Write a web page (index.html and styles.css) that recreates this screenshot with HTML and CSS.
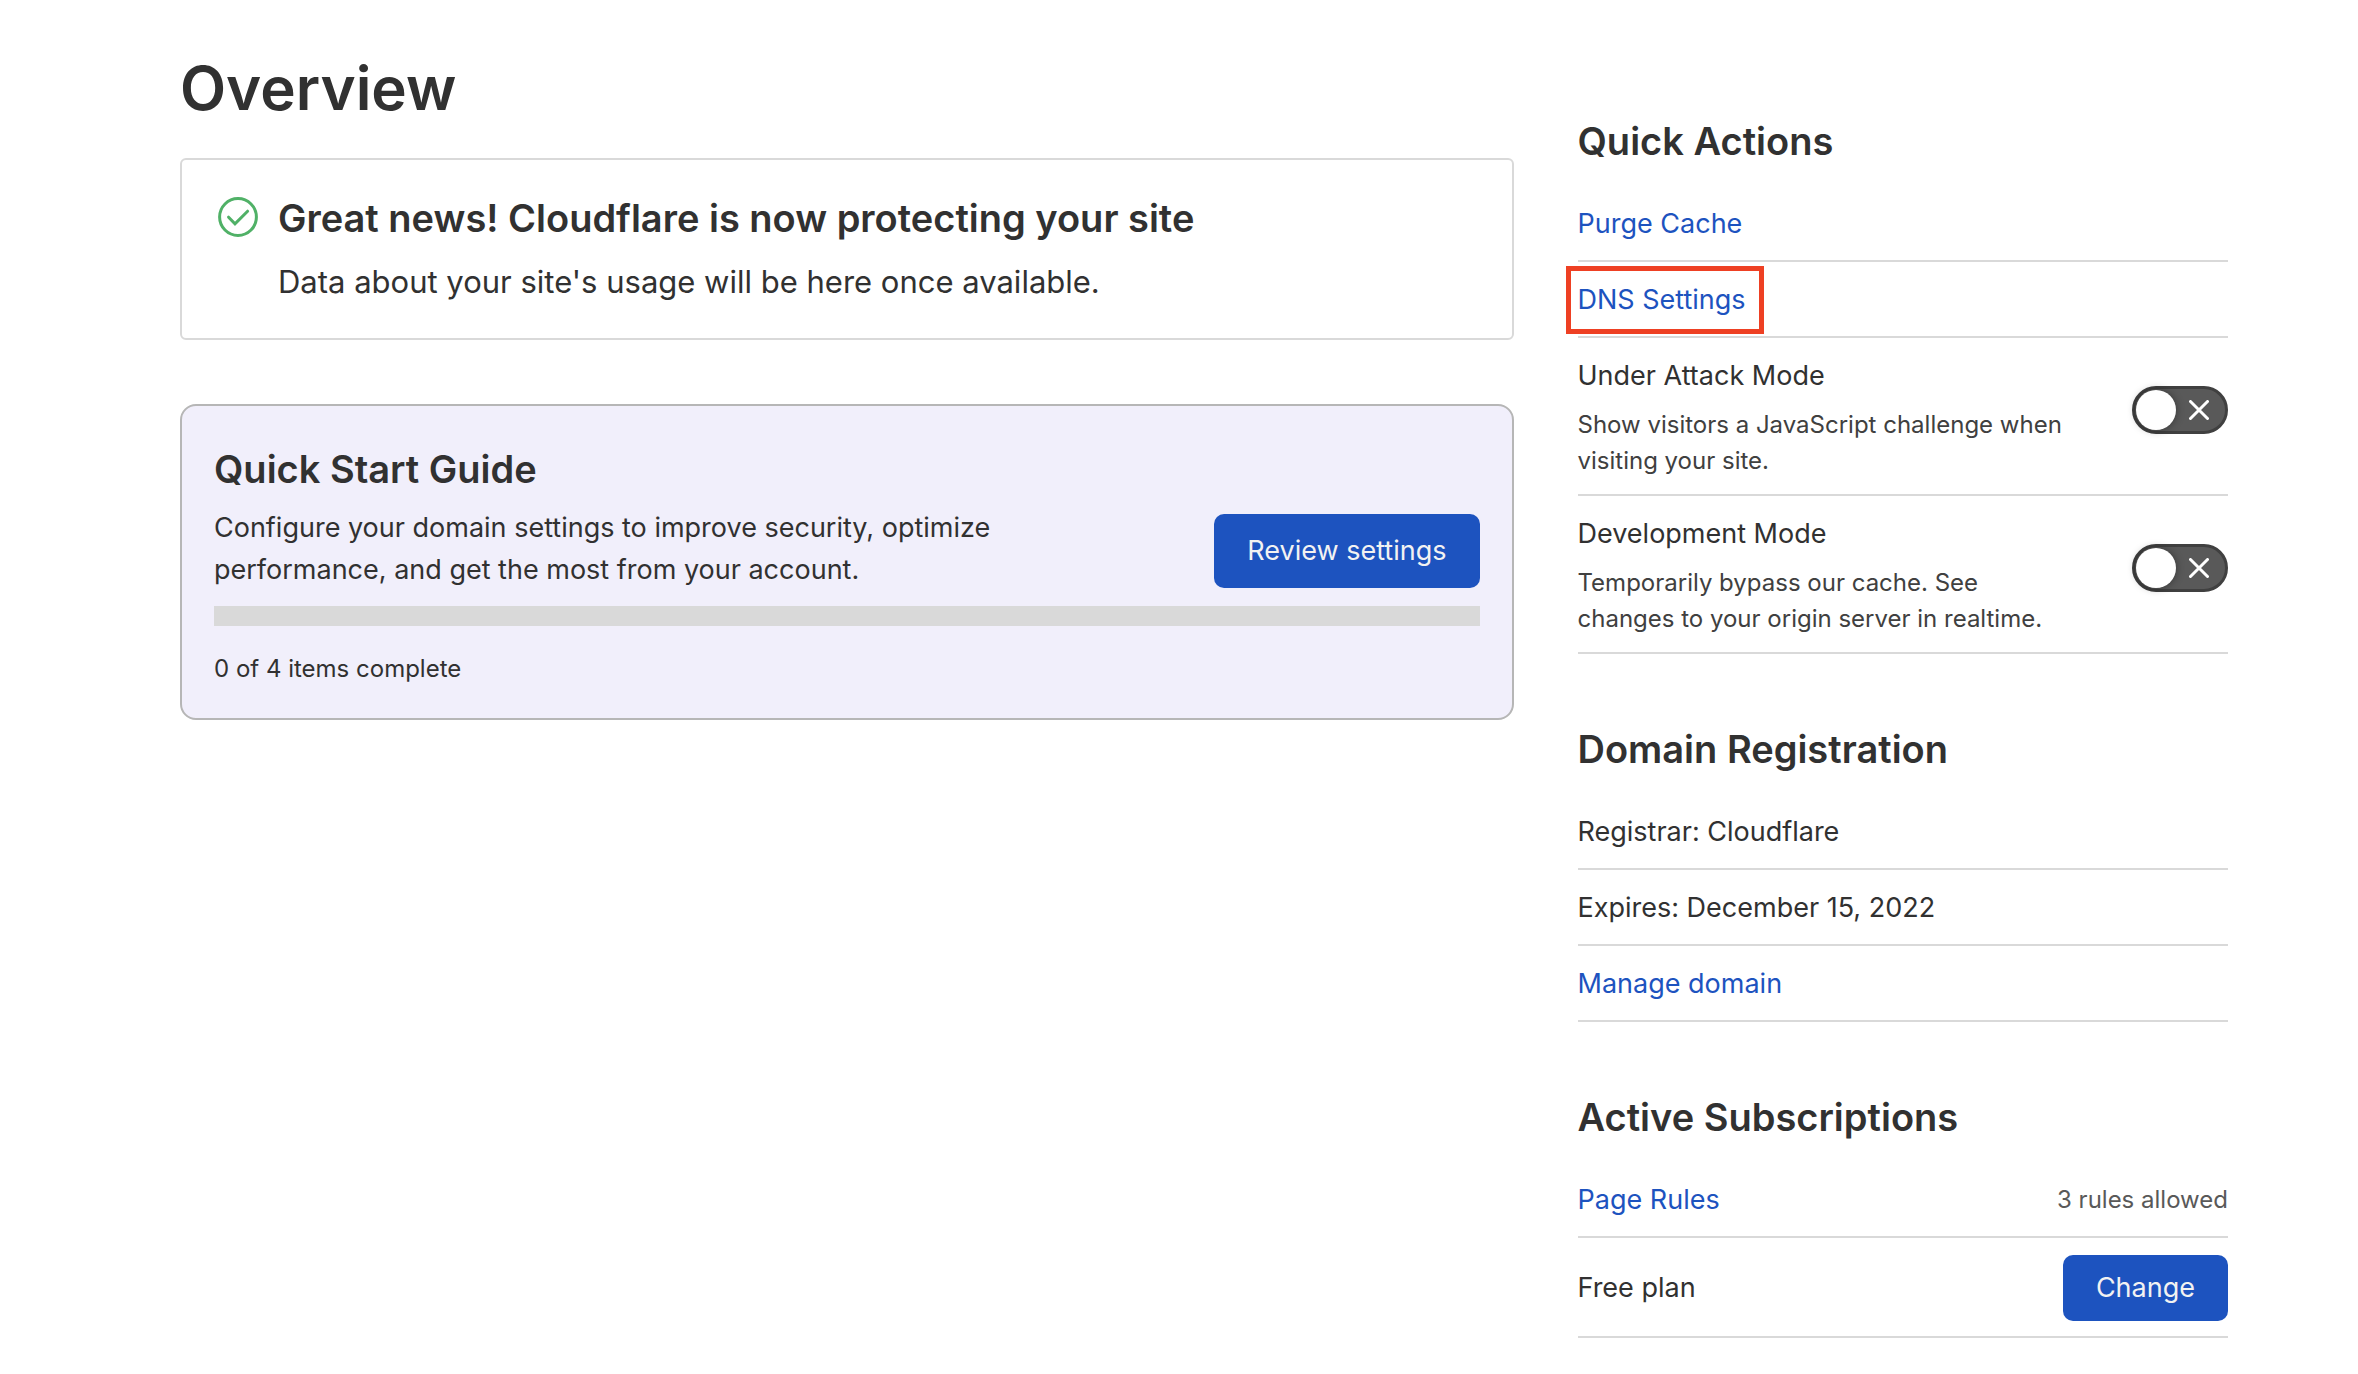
FILE: index.html
```html
<!DOCTYPE html>
<html lang="en">
<head>
  <meta charset="utf-8">
  <meta name="viewport" content="width=device-width, initial-scale=1">
  <title>Overview</title>
  <link rel="stylesheet" href="styles.css">
</head>
<body>
  <div class="page">
    <main class="main">
      <h1 class="page-title">Overview</h1>

      <section class="notice">
        <svg class="notice-icon" viewBox="0 0 40 40" fill="none" stroke="currentColor" stroke-width="3" aria-hidden="true">
          <circle cx="20" cy="20" r="18.4"/>
          <path d="M10.6 20.2 L17 26.8 L29.6 14.2" stroke-linecap="round"/>
        </svg>
        <div class="notice-body">
          <h2 class="heading">Great news! Cloudflare is now protecting your site</h2>
          <p class="notice-text">Data about your site's usage will be here once available.</p>
        </div>
      </section>

      <section class="guide">
        <div class="guide-top">
          <div class="guide-copy">
            <h2 class="heading">Quick Start Guide</h2>
            <p class="guide-text">Configure your domain settings to improve security, optimize performance, and get the most from your account.</p>
          </div>
          <button class="button button-large" type="button">Review settings</button>
        </div>
        <progress class="guide-progress" id="guide-progress" value="0" max="4"></progress>
        <label class="guide-status" for="guide-progress">0 of 4 items complete</label>
      </section>
    </main>

    <aside class="sidebar">
      <section class="panel">
        <h2 class="heading">Quick Actions</h2>
        <ul class="rows">
          <li class="row"><a class="link" href="#purge-cache">Purge Cache</a></li>
          <li class="row row-marked"><a class="link" href="#dns">DNS Settings</a></li>
          <li class="row row-setting">
            <div class="setting">
              <label for="attack-mode">Under Attack Mode</label>
              <p class="setting-text">Show visitors a JavaScript challenge when visiting your site.</p>
            </div>
            <span class="switch">
              <input class="switch-input" id="attack-mode" type="checkbox">
              <svg class="switch-mark" viewBox="0 0 20 20" aria-hidden="true"><path d="M1.5 1.5 L18.5 18.5 M18.5 1.5 L1.5 18.5"/></svg>
            </span>
          </li>
          <li class="row row-setting">
            <div class="setting">
              <label for="dev-mode">Development Mode</label>
              <p class="setting-text">Temporarily bypass our cache. See changes to your origin server in realtime.</p>
            </div>
            <span class="switch">
              <input class="switch-input" id="dev-mode" type="checkbox">
              <svg class="switch-mark" viewBox="0 0 20 20" aria-hidden="true"><path d="M1.5 1.5 L18.5 18.5 M18.5 1.5 L1.5 18.5"/></svg>
            </span>
          </li>
        </ul>
      </section>

      <section class="panel">
        <h2 class="heading">Domain Registration</h2>
        <ul class="rows">
          <li class="row">Registrar: Cloudflare</li>
          <li class="row">Expires: December 15, 2022</li>
          <li class="row"><a class="link" href="#manage-domain">Manage domain</a></li>
        </ul>
      </section>

      <section class="panel">
        <h2 class="heading">Active Subscriptions</h2>
        <ul class="rows">
          <li class="row"><a class="link" href="#page-rules">Page Rules</a><span class="row-note">3 rules allowed</span></li>
          <li class="row">Free plan<button class="button" type="button">Change</button></li>
        </ul>
      </section>
    </aside>
  </div>
</body>
</html>
```
FILE: styles.css
```css
* {
  box-sizing: border-box;
}

body,
h1,
h2,
p,
ul {
  margin: 0;
  padding: 0;
}

body {
  background: #fff;
  color: #313131;
  font-family: Inter, "Liberation Sans", sans-serif;
  font-size: 27px;
  line-height: 42px;
}

.page {
  display: grid;
  grid-template-columns: minmax(0, 41fr) minmax(0, 20fr);
  column-gap: 64px;
  padding: 48px 130px 36px 180px;
}

.page-title {
  margin-bottom: 30px;
  font-size: 60px;
  font-weight: 600;
  line-height: 80px;
}

.heading {
  font-size: 38px;
  font-weight: 600;
  line-height: 48px;
}

.notice {
  display: flex;
  gap: 20px;
  padding: 34px 36px 32px;
  border: 2px solid #d9d9d9;
  border-radius: 6px;
}

.notice-icon {
  flex: none;
  width: 40px;
  height: 40px;
  margin-top: 3px;
  color: #50b167;
}

.notice-text {
  margin-top: 16px;
  font-size: 31px;
  line-height: 48px;
}

.guide {
  margin-top: 64px;
  padding: 39px 32px 31px;
  border: 2px solid #b6b6b6;
  border-radius: 16px;
  background: #f1effb;
}

.guide-top {
  display: flex;
  align-items: flex-end;
  justify-content: space-between;
  gap: 32px;
}

.guide-text {
  max-width: 820px;
  margin-top: 14px;
}

.guide-progress {
  display: block;
  width: 100%;
  height: 20px;
  margin: 15px 0 25px;
  border: 0;
  background: #d9d9d9;
  appearance: none;
}

.guide-progress::-webkit-progress-bar {
  background: #d9d9d9;
}

.guide-progress::-webkit-progress-value {
  background: #1d53bf;
}

.guide-status {
  display: block;
  font-size: 24px;
  line-height: 36px;
}

.button {
  flex: none;
  padding: 12px 33px;
  border: 0;
  border-radius: 10px;
  background: #1d53bf;
  color: #f2f2f2;
  font: inherit;
}

.button-large {
  margin-bottom: 3px;
  padding: 16px 33px;
}

.sidebar {
  display: flex;
  flex-direction: column;
  gap: 71px;
  padding-top: 69px;
}

.rows {
  margin-top: 21px;
  list-style: none;
}

.row {
  display: flex;
  align-items: center;
  justify-content: space-between;
  padding: 17px 0 15px;
  border-bottom: 2px solid #d9d9d9;
}

.link {
  color: #1d53bf;
  text-decoration: none;
}

/* Highlight frame around the DNS link */
.row-marked .link {
  margin: -13px -12px;
  padding: 8px 13px 8px 7px;
  border: 5px solid #ee4023;
}

.row-note {
  color: #595959;
  font-size: 24px;
}

.row-setting {
  align-items: flex-start;
}

.setting {
  max-width: 500px;
}

.setting-text {
  margin-top: 10px;
  color: #404040;
  font-size: 24px;
  line-height: 36px;
}

.switch {
  display: grid;
  flex: none;
  align-items: center;
  margin-top: 31px;
}

.switch-input,
.switch-mark {
  grid-area: 1 / 1;
}

.switch-input {
  width: 96px;
  height: 48px;
  margin: 0;
  border: 3px solid #404040;
  border-radius: 24px;
  background: #595959;
  appearance: none;
}

.switch-input::before {
  content: "";
  display: block;
  width: 40px;
  height: 40px;
  margin: 1px;
  border-radius: 50%;
  background: #fff;
  box-shadow: 0 0 8px rgba(0, 0, 0, 0.4);
}

.switch-input:checked::before {
  margin-left: auto;
}

.switch-mark {
  justify-self: end;
  width: 20px;
  height: 20px;
  margin-right: 19px;
  fill: none;
  stroke: #fff;
  stroke-width: 3;
  stroke-linecap: round;
  pointer-events: none;
}
```
